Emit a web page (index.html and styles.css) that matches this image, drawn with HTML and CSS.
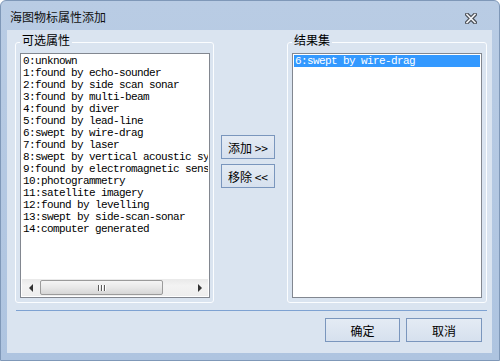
FILE: index.html
```html
<!DOCTYPE html>
<html lang="zh-CN">
<head>
<meta charset="UTF-8">
<title>海图物标属性添加</title>
<link rel="stylesheet" href="styles.css">
</head>
<body>
    <div class="window">
        <div class="titlebar">
            <span class="title">海图物标属性添加</span>
            <svg class="close" width="12" height="11" viewBox="0 0 12 11">
                <path d="M2 1.5 L10 9.5 M10 1.5 L2 9.5" stroke="#4b4f57" stroke-width="4" stroke-linecap="square"/>
                <path d="M2 1.5 L10 9.5 M10 1.5 L2 9.5" stroke="#f2f4f7" stroke-width="1.6" stroke-linecap="square"/>
            </svg>
        </div>
        <div class="client">
            <div class="panes">
                <fieldset class="group group-left">
                    <legend>可选属性</legend>
                    <div class="listbox">
                        <div class="items">
                            <div class="item">0:unknown</div>
                            <div class="item">1:found by echo-sounder</div>
                            <div class="item">2:found by side scan sonar</div>
                            <div class="item">3:found by multi-beam</div>
                            <div class="item">4:found by diver</div>
                            <div class="item">5:found by lead-line</div>
                            <div class="item">6:swept by wire-drag</div>
                            <div class="item">7:found by laser</div>
                            <div class="item">8:swept by vertical acoustic system</div>
                            <div class="item">9:found by electromagnetic sensor</div>
                            <div class="item">10:photogrammetry</div>
                            <div class="item">11:satellite imagery</div>
                            <div class="item">12:found by levelling</div>
                            <div class="item">13:swept by side-scan-sonar</div>
                            <div class="item">14:computer generated</div>
                        </div>
                        <!-- horizontal scrollbar -->
                        <div class="hscroll">
                            <div class="arrow"><span class="tri tri-left"></span></div>
                            <div class="track">
                                <div class="thumb"><span class="grip"></span><span class="grip"></span><span class="grip"></span></div>
                            </div>
                            <div class="arrow"><span class="tri tri-right"></span></div>
                        </div>
                    </div>
                </fieldset>
                <div class="move-buttons">
                    <button class="btn">添加 &gt;&gt;</button>
                    <button class="btn">移除 &lt;&lt;</button>
                </div>
                <fieldset class="group group-right">
                    <legend>结果集</legend>
                    <div class="listbox">
                        <div class="items">
                            <div class="item selected">6:swept by wire-drag</div>
                        </div>
                    </div>
                </fieldset>
            </div>
            <div class="separator"></div>
            <div class="dialog-buttons">
                <button class="btn btn-ok">确定</button>
                <button class="btn btn-cancel">取消</button>
            </div>
        </div>
    </div>
</body>
</html>
```
FILE: styles.css
```css
body {
    margin: 0;
    font-family: "Noto Sans CJK SC", "Liberation Sans", sans-serif;
    font-size: 12px;
    color: #000;
}
.window {
    width: 500px;
    height: 361px;
    box-sizing: border-box;
    background: linear-gradient(#b9cce4, #aec4e0);
    border: 1px solid #7f98b8;
    border-radius: 6px 6px 0 0;
    padding: 0 7px 7px 6px;
    display: flex;
    flex-direction: column;
}
.titlebar {
    height: 29px;
    display: flex;
    align-items: center;
    justify-content: space-between;
    padding: 0 15px 0 3px;
}
.title {
    font-size: 12px;
    color: #111;
    margin-top: 2px;
}
.close {
    margin-top: 5px;
}
.client {
    flex: 1;
    background: #dae4f0;
    padding: 3px 5px 0 8px;
}
.panes {
    display: flex;
    height: 270px;
}
.group {
    margin: 0;
    box-sizing: border-box;
    height: 270px;
    border: 1px solid #fbfdff;
    border-radius: 3px;
    padding: 2px 3px 4px 4px;
    min-width: 0;
}
.group-left {
    width: 199px;
}
.group-right {
    width: 200px;
    padding-right: 4px;
}
.group legend {
    padding: 0 2px 4px;
    line-height: 14px;
}
.listbox {
    height: 245px;
    box-sizing: border-box;
    border: 1px solid #828790;
    padding: 1px;
    background: #fff;
    display: flex;
    flex-direction: column;
}
.items {
    flex: 1;
    overflow: hidden;
    font-family: "Liberation Mono", monospace;
    font-size: 11px;
    letter-spacing: -0.6px;
    line-height: 12px;
}
.item {
    white-space: nowrap;
    padding-left: 1px;
    height: 12px;
}
.item.selected {
    background: #3399ff;
    color: #fff;
}
.hscroll {
    height: 17px;
    display: flex;
    background: linear-gradient(#e9e9e9, #f3f3f3 40%, #eeeeee);
}
.arrow {
    width: 17px;
    display: flex;
    align-items: center;
    justify-content: center;
}
.tri {
    width: 0;
    height: 0;
    border-top: 4px solid transparent;
    border-bottom: 4px solid transparent;
}
.tri-left {
    border-right: 4px solid #333;
}
.tri-right {
    border-left: 4px solid #333;
}
.track {
    flex: 1;
    padding: 1px 0 1px 1px;
}
.thumb {
    width: 123px;
    height: 15px;
    box-sizing: border-box;
    border: 1px solid #9b9b9b;
    border-radius: 2px;
    background: linear-gradient(#f5f5f5, #e8e8e8 50%, #d6d6d6);
    display: flex;
    justify-content: center;
    align-items: center;
    gap: 1px;
}
.grip {
    width: 1px;
    height: 6px;
    background: #5c5c5c;
    border-right: 1px solid #fff;
}
.move-buttons {
    width: 54px;
    margin: 0 12px 0 7px;
    padding-top: 102px;
    display: flex;
    flex-direction: column;
    gap: 5px;
}
.btn {
    height: 24px;
    padding: 0;
    border: 1px solid #7a96bd;
    background: linear-gradient(#e4ebf4, #d6e0ee);
    font-family: "Noto Sans CJK SC", "Liberation Sans", sans-serif;
    font-size: 12px;
    color: #000;
}
.separator {
    height: 1px;
    background: #7ea2d2;
    margin: 7px 0 0 1px;
}
.dialog-buttons {
    display: flex;
    justify-content: flex-end;
    gap: 6px;
    margin-top: 7px;
    padding-right: 5px;
}
.btn-ok {
    width: 75px;
}
.btn-cancel {
    width: 76px;
}
```
